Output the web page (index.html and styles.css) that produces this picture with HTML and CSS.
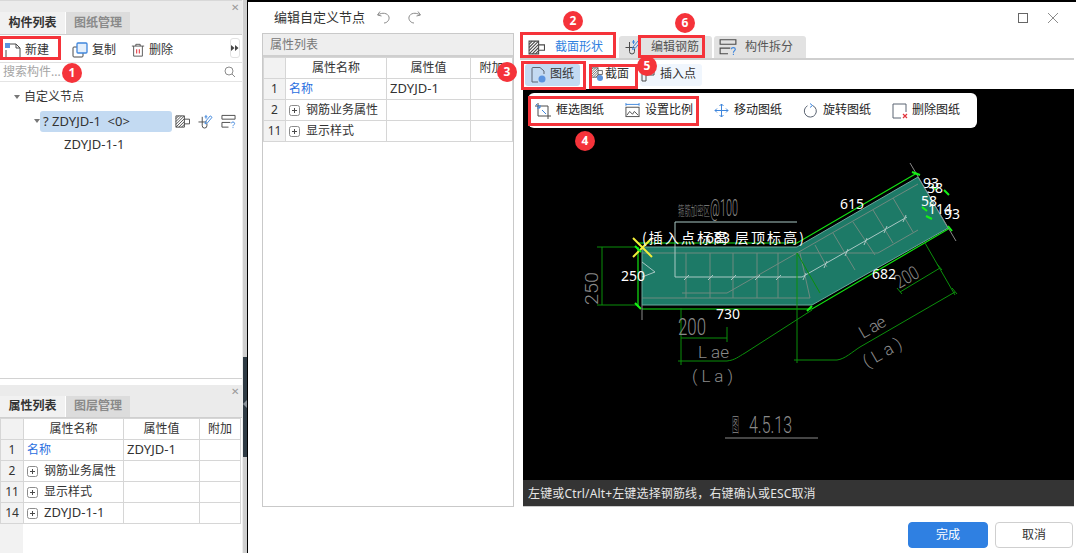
FILE: index.html
```html
<!DOCTYPE html>
<html lang="zh-CN">
<head>
<meta charset="utf-8">
<title>编辑自定义节点</title>
<link rel="stylesheet" href="styles.css">
</head>
<body>
<svg class="defs" width="0" height="0" aria-hidden="true">
  <defs>
    <symbol id="i-section" viewBox="0 0 16 14">
      <path class="ln-dark" d="M1 1h9v12H1zM10 4.500h5.500v5H10"/>
      <path class="ln-dark" d="M1 4l3-3M1 7l6-6M1 10l9-9M1 13l9-9M4 13l6-6M7 13l3-3"/>
    </symbol>
    <symbol id="i-rebar" viewBox="0 0 16 16">
      <path class="ln-dark" d="M.5 8.500h9M4.500 3v9.500a2.500 2.500 0 0 0 5 0V10"/>
      <path class="ln-blue" d="M8 8l5-6 2 1.500-5 6-2.500 1zM8.500 1v4M7 3h3"/>
    </symbol>
    <symbol id="i-split" viewBox="0 0 16 15">
      <path class="ln-dark" d="M1 1h14v4H1zM10 8.500H1v5h7"/>
      <path class="ln-blue" d="M11 9.500c0-2 3.500-2 3.500 0 0 1.500-1.700 1.500-1.700 3M12.800 13.500v1"/>
    </symbol>
    <symbol id="i-sheet" viewBox="0 0 18 18">
      <path class="ln-slate" d="M4 1.500h7l4 3.500v3M9 16H3V2.500a1 1 0 0 1 1-1"/>
      <circle class="fill-blue" cx="13" cy="13" r="3.500"/>
    </symbol>
    <symbol id="i-plus" viewBox="0 0 11 11">
      <rect class="ln-gray" x=".5" y=".5" width="10" height="10" rx="2"/>
      <path class="ln-dark" d="M3 5.500h5M5.500 3v5"/>
    </symbol>
  </defs>
</svg>

<div class="app">
  <aside class="side">
    <section class="panel panel-top">
      <div class="strip"><span class="close-x">✕</span></div>
      <div class="tabs">
        <div class="tab active">构件列表</div>
        <div class="tab">图纸管理</div>
      </div>
      <div class="toolbar">
        <div class="tool tool-new">
          <svg class="ico17" viewBox="0 0 17 17"><path class="ln-dark" d="M5 2h7l4 4v9.500H2V8"/><path class="ln-dark" d="M12 2v4h4"/><rect class="fill-blue" x="1" y="1" width="5" height="5"/></svg>
          <span>新建</span>
        </div>
        <div class="tool tool-copy">
          <svg class="ico16" viewBox="0 0 16 16"><rect class="ln-dark" x="1" y="5" width="10" height="10" rx="1"/><rect class="ln-blue solid" x="5" y="1" width="10" height="10" rx="1"/></svg>
          <span>复制</span>
        </div>
        <div class="tool">
          <svg class="ico14" viewBox="0 0 16 16"><path class="ln-dark" d="M1 3.500h14M5.500 3.500v-2h5v2M3 3.500V15h10V3.500"/><path class="ln-red" d="M6.500 7v5M9.500 7v5"/></svg>
          <span>删除</span>
        </div>
        <div class="more"><svg class="more-ico" viewBox="0 0 8 8"><path class="fill-dark" d="M0 1l3.500 3L0 7zM4 1l3.500 3L4 7z"/></svg></div>
      </div>
      <div class="search">
        <span>搜索构件...</span>
        <svg class="ico12" viewBox="0 0 12 12"><circle class="ln-gray" cx="5" cy="5" r="4"/><path class="ln-gray" d="M8 8l3 3"/></svg>
      </div>
      <div class="tree">
        <div class="node lvl0"><i class="caret"></i>自定义节点</div>
        <div class="node lvl1">
          <i class="caret"></i>
          <span class="node-sel lat">? ZDYJD-1&nbsp;&nbsp;&lt;0&gt;</span>
          <svg class="ico15"><use href="#i-section"/></svg>
          <svg class="ico15"><use href="#i-rebar"/></svg>
          <svg class="ico15"><use href="#i-split"/></svg>
        </div>
        <div class="node lvl2 lat">ZDYJD-1-1</div>
      </div>
    </section>
    <section class="panel panel-bottom">
      <div class="strip"><span class="close-x">✕</span></div>
      <div class="tabs tabs-low">
        <div class="tab active">属性列表</div>
        <div class="tab">图层管理</div>
      </div>
      <div class="grid-wrap">
        <table class="grid grid-side">
          <colgroup><col class="c-n"><col class="c-a"><col class="c-b"><col class="c-c"></colgroup>
          <tr><th></th><th>属性名称</th><th>属性值</th><th>附加</th></tr>
          <tr><th>1</th><td class="link">名称</td><td class="lat">ZDYJD-1</td><td></td></tr>
          <tr><th>2</th><td><svg class="plus"><use href="#i-plus"/></svg>钢筋业务属性</td><td></td><td></td></tr>
          <tr><th>11</th><td><svg class="plus"><use href="#i-plus"/></svg>显示样式</td><td></td><td></td></tr>
          <tr><th>14</th><td class="lat"><svg class="plus"><use href="#i-plus"/></svg>ZDYJD-1-1</td><td></td><td></td></tr>
        </table>
      </div>
    </section>
  </aside>

  <div class="splitter"><div class="splitter-dark"><i></i></div></div>

  <main class="dialog">
    <header class="dlg-head">
      <span class="dlg-title">编辑自定义节点</span>
      <svg class="ico15 hist" viewBox="0 0 15 15"><path class="ln-gray" d="M4 1.500L1.500 5 5.500 6M2 5c4-3 10-2 11 2 .7 3-2 6-5 6"/></svg>
      <svg class="ico15 hist" viewBox="0 0 15 15"><path class="ln-gray" d="M11 1.500L13.500 5 9.500 6M13 5C9 2 3 3 2 7c-.7 3 2 6 5 6"/></svg>
      <div class="win-btns">
        <span class="win-max"></span>
        <svg class="ico12" viewBox="0 0 12 12"><path class="ln-gray" d="M1 1l10 10M11 1L1 11"/></svg>
      </div>
    </header>

    <div class="dlg-body">
      <section class="props">
        <div class="props-title">属性列表</div>
        <table class="grid grid-dlg">
          <colgroup><col class="d-n"><col class="d-a"><col class="d-b"><col class="d-c"></colgroup>
          <tr><th></th><th>属性名称</th><th>属性值</th><th>附加</th></tr>
          <tr><th>1</th><td class="link">名称</td><td class="lat">ZDYJD-1</td><td></td></tr>
          <tr><th>2</th><td><svg class="plus"><use href="#i-plus"/></svg>钢筋业务属性</td><td></td><td></td></tr>
          <tr><th>11</th><td><svg class="plus"><use href="#i-plus"/></svg>显示样式</td><td></td><td></td></tr>
        </table>
      </section>

      <section class="work">
        <div class="work-tabs">
          <div class="wtab wtab-on"><svg class="ico17"><use href="#i-section"/></svg><span>截面形状</span></div>
          <div class="wtab wtab-rebar"><svg class="ico16"><use href="#i-rebar"/></svg><span>编辑钢筋</span></div>
          <div class="wtab wtab-split"><svg class="ico18"><use href="#i-split"/></svg><span>构件拆分</span></div>
        </div>
        <div class="sub-tabs">
          <div class="stab stab-sheet"><svg class="ico18"><use href="#i-sheet"/></svg>图纸</div>
          <div class="stab stab-sec"><svg class="ico15" viewBox="0 0 15 15"><use href="#i-section" width="13" height="11"/><circle class="fill-blue" cx="10" cy="11" r="3"/></svg>截面</div>
          <div class="stab stab-ins"><svg class="ico15" viewBox="0 0 15 15"><path class="ln-dark" d="M1 2h12v6H5v6H1z"/></svg>插入点</div>
        </div>
        <div class="canvas">
          <svg class="cad" viewBox="523 89 550 391" width="550" height="391">
            <polygon class="cad-fill" points="642,247 797,247 918,177 948,228 812,305 642,305"/>
            <path class="cad-rebar" d="M642 253H878L918 230M797 253L895 197 918 184M642 298H810L800 253M682 293H727L797 253M686 253V298M710 253V298M733 253V298M757 253V298M778 253V298M815 245L827 267M833 233L855 270M853 222L875 255M873 210L893 243M893 198L913 232"/>
            <path class="cad-main" d="M675 222H797M675 222V277H802L907 217M642 262L655 272 642 277"/>
            <path class="cad-tick" d="M684 280l5-5M708 280l5-5M731 280l5-5M755 280l5-5M776 280l5-5M803 280l3-7M824 268l3-7M845 256l3-7M864 245l3-7M884 233l3-7M903 222l3-7"/>
            <path class="cad-bright" d="M638 243H797L917 173M642 309H812L950 228M638 247V307"/>
            <path class="cad-dim" d="M797 253L820 293M602 247V305M597 247H637M597 305H637M681 308V365M681 338H727M727 327V342M678 361H727C735 360 738 357 745 353L812 310M797 253V363M794 360H837C845 359 852 352 860 347L955 292M925 243L955 295M900 292L940 268M897 288l5 6M937 264l5 6M952 288l5 6"/>
            <path class="cad-gray" d="M642 305V320M910 163L956 241M725 438H818"/>
            <path class="cad-x" d="M633 238L652 257M633 257L652 238"/>
            <path class="cad-marks" d="M635 246l6 6M635 303l6 6M812 306l-5 5M912 172l8 3M932 186l5 4M944 190l5 5M922 207l5 4M926 216l6 3M948 226l4 5"/>
            <text class="cad-note" x="678" y="215" textLength="32" lengthAdjust="spacingAndGlyphs">箍筋加密区</text>
            <text class="cad-note tall" x="710" y="216" textLength="28" lengthAdjust="spacingAndGlyphs">@100</text>
            <text class="cad-note tall" x="678" y="335" textLength="28" lengthAdjust="spacingAndGlyphs">200</text>
            <text class="cad-note big rot-v" textLength="33" lengthAdjust="spacingAndGlyphs">250</text>
            <text class="cad-note mid" x="698" y="358" textLength="31" lengthAdjust="spacing">L ae</text>
            <text class="cad-note mid" x="692" y="382" textLength="41" lengthAdjust="spacing">( L a )</text>
            <text class="cad-note big" x="732" y="432" textLength="7" lengthAdjust="spacingAndGlyphs">图</text>
            <text class="cad-note tall" x="749" y="433" textLength="43" lengthAdjust="spacingAndGlyphs">4.5.13</text>
            <text class="cad-note big rot-a" textLength="25" lengthAdjust="spacingAndGlyphs">200</text>
            <text class="cad-note mid rot-b" textLength="28" lengthAdjust="spacing">L ae</text>
            <text class="cad-note mid rot-c" textLength="42" lengthAdjust="spacing">( L a )</text>
            <text class="cad-label" x="642" y="243" textLength="162" lengthAdjust="spacing">(插入点标高 层顶标高)</text>
            <text class="cad-num" x="706" y="243">683</text>
            <text class="cad-num" x="840" y="209">615</text>
            <text class="cad-num" x="621" y="281">250</text>
            <text class="cad-num" x="716" y="319">730</text>
            <text class="cad-num" x="872" y="279">682</text>
            <text class="cad-num" x="923" y="188">93</text>
            <text class="cad-num" x="927" y="193">38</text>
            <text class="cad-num" x="921" y="206">58</text>
            <text class="cad-num" x="928" y="214">114</text>
            <text class="cad-num" x="944" y="219">93</text>
          </svg>
          <div class="float-bar">
            <div class="fb-item"><svg class="ico16" viewBox="0 0 16 16"><path class="ln-dark" d="M3 0v13h13M0 3h13v13"/><path class="ln-blue" d="M1 1l4 4M11 11L7 7M5 2v3H2"/></svg>框选图纸</div>
            <div class="fb-item"><svg class="ico15" viewBox="0 0 16 16"><path class="ln-blue" d="M1 1.500h14M1 0v3M15 0v3"/><rect class="ln-dark" x="1" y="4.500" width="14" height="10"/><path class="ln-dark" d="M2 13l3-4 3 3 2-3 4 4"/></svg>设置比例</div>
            <div class="fb-item"><svg class="ico15" viewBox="0 0 15 15"><path class="ln-blue" d="M7.500 1v13M1 7.500h13M5.500 3l2-2 2 2M5.500 12l2 2 2-2M3 5.500l-2 2 2 2M12 5.500l2 2-2 2"/></svg>移动图纸</div>
            <div class="fb-item"><svg class="ico15" viewBox="0 0 15 15"><path class="ln-slate" d="M9.500 2.500a6 6 0 1 1-5 .3"/><path class="ln-blue" d="M7 .5l2.500 2L7 4.500"/></svg>旋转图纸</div>
            <div class="fb-item fb-del"><svg class="ico16" viewBox="0 0 16 16"><path class="ln-slate" d="M9 15H1V1h13v8"/><path class="ln-red" d="M11 11l4 4M15 11l-4 4"/></svg>删除图纸</div>
          </div>
        </div>
        <div class="status">左键或Ctrl/Alt+左键选择钢筋线，右键确认或ESC取消</div>
      </section>
    </div>

    <footer class="dlg-foot">
      <button class="btn btn-primary" type="button">完成</button>
      <button class="btn" type="button">取消</button>
    </footer>
  </main>
</div>

<div class="mark box-1"></div>
<div class="mark box-2"></div>
<div class="mark box-3"></div>
<div class="mark box-4"></div>
<div class="mark box-5"></div>
<div class="mark box-6"></div>
<div class="badge badge-1">1</div>
<div class="badge badge-2">2</div>
<div class="badge badge-3">3</div>
<div class="badge badge-4">4</div>
<div class="badge badge-5">5</div>
<div class="badge badge-6">6</div>
</body>
</html>
```

FILE: styles.css
```css
* { box-sizing: border-box; }
html, body { margin: 0; height: 100%; }
body {
  position: relative;
  width: 1076px;
  height: 553px;
  overflow: hidden;
  background: #fff;
  color: #333;
  font: 12px/1.2 "Noto Sans", "Noto Sans CJK SC", sans-serif;
}
.defs { position: absolute; }
svg { display: block; flex: none; fill: none; }

.ln-dark { stroke: #4a4a4a; stroke-width: 1; fill: none; }
.ln-blue { stroke: #3f86dc; stroke-width: 1; fill: none; }
.ln-blue.solid { fill: #e4effb; stroke-width: 1.300; }
.ln-slate { stroke: #5b6472; stroke-width: 1; fill: none; }
.ln-gray { stroke: #8c8c8c; stroke-width: 1; fill: none; }
.ln-red { stroke: #e2343c; stroke-width: 1.200; fill: none; }
.fill-blue { fill: #5b94e0; }
.fill-dark { fill: #444; }

.ico12 { width: 12px; height: 12px; }
.ico14 { width: 14px; height: 14px; }
.ico15 { width: 15px; height: 15px; }
.ico16 { width: 16px; height: 16px; }
.ico17 { width: 17px; height: 17px; }
.ico18 { width: 18px; height: 18px; }
.lat { font-size: 13px; }

.app { display: flex; height: 553px; }

/* left column */
.side { width: 242px; flex: none; display: flex; flex-direction: column; background: #fff; }
.panel { display: flex; flex-direction: column; }
.panel-top { height: 379px; border-bottom: 1px solid #d2d2d2; border-top: 1px solid #d8d8d8; margin-bottom: 6px; }
.panel-bottom { flex: 1; min-height: 0; }
.strip {
  height: 11px;
  background: #ebebeb;
  display: flex;
  align-items: center;
  justify-content: flex-end;
  padding-right: 3px;
}
.close-x { font-size: 10px; line-height: 10px; color: #999; }
.tabs { display: flex; height: 23px; background: #ebebeb; border-bottom: 1px solid #cfcfcf; }
.tabs-low { height: 22px; }
.tab {
  width: 65px;
  display: flex;
  align-items: center;
  justify-content: center;
  background: #dcdcdc;
  color: #8a8a8a;
  font-weight: 700;
  border-left: 1px solid #fff;
}
.tab.active { background: #f1f1f1; color: #333; border-left: 0; }

.toolbar {
  display: flex;
  align-items: center;
  height: 28px;
  padding: 3px 0 0 4px;
  border-bottom: 1px solid #e0e0e0;
  position: relative;
}
.tool { display: flex; align-items: center; gap: 4px; margin-right: 13px; }
.tool-new { width: 56px; margin-right: 12px; }
.tool-copy { margin-right: 15px; }
.more {
  position: absolute;
  right: 2px;
  top: 3px;
  width: 10px;
  height: 20px;
  display: flex;
  align-items: center;
  justify-content: center;
  border: 1px solid #e2e2e2;
  border-radius: 3px;
}
.more-ico { width: 8px; height: 8px; }
.search {
  height: 19px;
  display: flex;
  align-items: center;
  justify-content: space-between;
  padding: 0 6px 0 3px;
  color: #a5a5a5;
  border-bottom: 1px solid #e4e4e4;
}
.tree { flex: 1; padding-top: 3px; }
.node { height: 24px; display: flex; align-items: center; }
.caret {
  width: 0;
  height: 0;
  border: 3.500px solid transparent;
  border-top: 4px solid #777;
  border-bottom: 0;
  margin-right: 4px;
  flex: none;
}
.lvl0 { padding-left: 14px; }
.lvl1 { padding-left: 34px; gap: 0; }
.lvl1 .caret { margin-right: 0; }
.lvl1 .ico15 { margin-left: 8px; }
.lvl1 .node-sel + .ico15 { margin-left: 3px; }
.lvl2 { padding-left: 64px; }
.node-sel {
  width: 132px;
  height: 21px;
  padding-left: 3px;
  line-height: 21px;
  background: #c3daf2;
  border-radius: 3px;
}

/* tables */
.grid { border-collapse: collapse; table-layout: fixed; background: #fff; }
.grid th, .grid td {
  height: 21px;
  padding: 0 3px;
  border: 1px solid #d6d6d6;
  font-weight: 400;
  white-space: nowrap;
  overflow: hidden;
}
.grid tr:first-child th { text-align: center; }
.grid tr:first-child th:first-child, .grid th { background: #f2f2f2; text-align: center; padding: 0; }
.grid tr:first-child th:not(:first-child) { background: #fff; }
.link { color: #2a6fe0; }
.plus { width: 11px; height: 11px; display: inline-block; vertical-align: -2px; margin: 0 6px 0 0; }
.grid-wrap { flex: 1; background: linear-gradient(90deg, #f2f2f2 23px, #fff 23px); }
.c-n { width: 23px; } .c-a { width: 100px; } .c-b { width: 76px; } .c-c { width: 41px; }

/* splitter */
.splitter {
  width: 6px;
  flex: none;
  position: relative;
  background: #cfcfcf;
  border-right: 1px solid #000;
  border-left: 1px solid #eee;
}
.splitter-dark { position: absolute; left: 0; top: 357px; width: 4px; height: 100px; background: #2f3b44; }
.splitter-dark i {
  position: absolute;
  left: 0;
  top: 43px;
  border: 4px solid transparent;
  border-right: 4px solid #8a9299;
  border-left: 0;
}

/* dialog */
.dialog {
  flex: 1;
  min-width: 0;
  display: flex;
  flex-direction: column;
  background: #fff;
  border-top: 2px solid #000;
}
.dlg-head { height: 31px; display: flex; align-items: center; padding: 0 17px 0 26px; gap: 0; }
.dlg-title { font-size: 13px; margin-right: 11px; }
.hist { margin-right: 16px; }
.win-btns { margin-left: auto; display: flex; align-items: center; gap: 19px; }
.win-max { width: 10px; height: 10px; border: 1px solid #666; }
.dlg-body { height: 474px; display: flex; padding-left: 14px; }

.props { width: 252px; flex: none; border: 1px solid #c9c9c9; }
.props-title {
  height: 23px;
  line-height: 21px;
  padding-left: 7px;
  background: #eee;
  color: #777;
  border-bottom: 2px solid #cfcfcf;
}
.d-n { width: 22px; } .d-a { width: 101px; } .d-b { width: 84px; } .d-c { width: 42px; }

.work { width: 551px; flex: none; margin-left: 9px; display: flex; flex-direction: column; }
.work-tabs { height: 27px; display: flex; align-items: flex-end; margin-left: -3px; border-bottom: 2px solid #cfcfcf; }
.wtab {
  height: 22px;
  display: flex;
  align-items: center;
  background: #e2e2e2;
  color: #555;
  border-radius: 3px 3px 0 0;
}
.wtab-on { width: 96px; background: #fff; color: #2f7fe0; padding-left: 8px; gap: 10px; margin-right: 3px; }
.wtab-rebar { width: 93px; padding-left: 6px; gap: 10px; margin-right: 2px; }
.wtab-split { width: 92px; padding-left: 5px; gap: 8px; }
.sub-tabs { height: 29px; display: flex; align-items: center; padding-left: 2px; }
.stab { height: 22px; display: flex; align-items: center; gap: 3px; border-radius: 3px; }
.stab-sheet { width: 55px; padding-left: 4px; background: #c3daf2; margin-right: 10px; }
.stab-sec { width: 46px; gap: 0; margin-right: 4px; }
.stab-ins { width: 62px; padding-left: 1px; gap: 4px; background: #f0f6fd; }

.canvas { position: relative; flex: 1; min-height: 0; background: #000; overflow: hidden; }
.cad { display: block; }
.float-bar {
  position: absolute;
  left: 5px;
  top: 4px;
  width: 449px;
  height: 35px;
  display: flex;
  align-items: center;
  padding-left: 7px;
  gap: 21px;
  background: #fff;
  color: #222;
  border-radius: 6px;
}
.fb-item { display: flex; align-items: center; gap: 5px; white-space: nowrap; }
.fb-del { gap: 4px; }

.status {
  height: 27px;
  line-height: 27px;
  padding-left: 5px;
  letter-spacing: .15px;
  background: #343434;
  color: #e6e6e6;
  border-bottom: 1px solid #ccc;
}

.dlg-foot { flex: 1; display: flex; justify-content: flex-end; align-items: flex-start; gap: 7px; padding: 15px 3px 0 0; }
.btn {
  width: 78px;
  height: 26px;
  padding: 0;
  font: inherit;
  color: #333;
  background: #fff;
  border: 1px solid #cfcfcf;
  border-radius: 4px;
}
.btn-primary { width: 80px; background: #2f80e2; border-color: #2f80e2; color: #fff; }

/* CAD strokes */
.cad-fill { fill: #1d7a67; stroke: #6aa89c; stroke-width: 1; }
.cad-rebar { fill: none; stroke: #6f8a80; stroke-width: 1; }
.cad-main { fill: none; stroke: #a9c8c4; stroke-width: 1; }
.cad-tick { fill: none; stroke: #a9c8c4; stroke-width: 1; }
.cad-bright { fill: none; stroke: #12e312; stroke-width: 1.200; }
.cad-dim { fill: none; stroke: #0b8f0b; stroke-width: 1; }
.cad-gray { fill: none; stroke: #8a8a8a; stroke-width: 1; }
.cad-x { fill: none; stroke: #f2ee3a; stroke-width: 2; }
.cad-marks { fill: none; stroke: #16f016; stroke-width: 2; }
.cad text { font-family: Roboto, "Noto Sans CJK SC", sans-serif; font-weight: 300; }
.cad-note { fill: #8a8a8a; font-size: 13px; }
.cad-note.big { font-size: 19px; }
.cad-note.tall { font-size: 24px; }
.cad-note.mid { font-size: 17px; }
.rot-v { transform: translate(598px, 305px) rotate(-90deg); }
.rot-a { transform: translate(899px, 289px) rotate(-30deg); }
.rot-b { transform: translate(863px, 339px) rotate(-30deg); }
.rot-c { transform: translate(867px, 368px) rotate(-30deg); }
.cad .cad-label { fill: #fff; font-family: "Noto Sans CJK SC", sans-serif; font-weight: 400; font-size: 14px; }
.cad .cad-num { fill: #fff; font-family: "Noto Sans", sans-serif; font-weight: 400; font-size: 14px; }

/* annotations laid over the screenshot */
.mark { position: absolute; border: 3px solid #f5333a; }
.box-1 { left: 0; top: 36px; width: 61px; height: 24px; }
.box-2 { left: 520px; top: 32px; width: 96px; height: 26px; }
.box-3 { left: 521px; top: 61px; width: 65px; height: 29px; }
.box-4 { left: 528px; top: 96px; width: 171px; height: 30px; }
.box-5 { left: 589px; top: 64px; width: 49px; height: 25px; }
.box-6 { left: 638px; top: 35px; width: 67px; height: 23px; }
.badge {
  position: absolute;
  width: 20px;
  height: 20px;
  text-align: center;
  color: #fff;
  background: #f5333a;
  border-radius: 50%;
  font: 700 12px/20px "Open Sans", sans-serif;
}
.badge-1 { left: 62px; top: 63px; }
.badge-2 { left: 563px; top: 11px; }
.badge-3 { left: 497px; top: 62px; }
.badge-4 { left: 575px; top: 131px; }
.badge-5 { left: 637px; top: 56px; }
.badge-6 { left: 675px; top: 13px; }
```
